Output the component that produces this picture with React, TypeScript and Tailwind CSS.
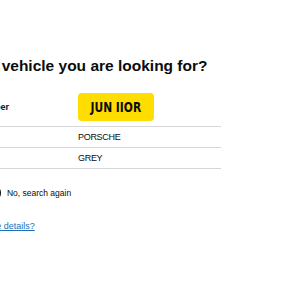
export default function App() {
  const rows = [
    { key: "Make", value: "PORSCHE" },
    { key: "Colour", value: "GREY" },
  ];

  return (
    <div className="w-[300px] h-[300px] overflow-hidden bg-white text-[#0b0c0c] font-['Liberation_Sans',Arial,sans-serif]">
      <div className="-ml-[75px] pt-[56px]">
        <h1 className="text-[15.5px] leading-[20px] font-bold whitespace-nowrap mb-[12px]">
          Is this the vehicle you are looking for?
        </h1>

        {/* Summary list */}
        <dl className="-ml-[4px] w-[300px] text-[9px] leading-[12px]">
          <div className="grid grid-cols-[157px_1fr] items-center border-b border-[#d4d6d7] py-[5px]">
            <dt className="font-bold whitespace-nowrap">Registration number</dt>
            <dd>
              <span className="flex w-[76px] h-[28px] items-center justify-center rounded-[4px] bg-[#ffdd00] text-[14px] font-bold font-['DejaVu_Sans_Condensed','Liberation_Sans_Narrow',sans-serif]">
                <span className="inline-block scale-x-[0.85]">JUN IIOR</span>
              </span>
            </dd>
          </div>
          {rows.map((row) => (
            <div
              key={row.key}
              className="grid grid-cols-[157px_1fr] items-center border-b border-[#d4d6d7] py-[4px]"
            >
              <dt className="font-bold">{row.key}</dt>
              <dd className="tracking-[-0.3px]">{row.value}</dd>
            </div>
          ))}
        </dl>

        {/* Radios */}
        <div className="flex items-center gap-[22px] mt-[16px] ml-[2px] text-[8.5px] leading-[12px]">
          <label className="flex items-center gap-[6px]">
            <span className="w-[16px] h-[16px] rounded-full border-2 border-[#0b0c0c] bg-white" />
            Yes
          </label>
          <label className="flex items-center gap-[6px]">
            <span className="w-[16px] h-[16px] rounded-full border-2 border-[#0b0c0c] bg-white" />
            No, search again
          </label>
        </div>

        <div className="mt-[19px] text-[9px] leading-[12px]">
          <a href="#" className="text-[#1d70b8] underline whitespace-nowrap">
            Why can&apos;t I see the details?
          </a>
        </div>
      </div>
    </div>
  );
}
